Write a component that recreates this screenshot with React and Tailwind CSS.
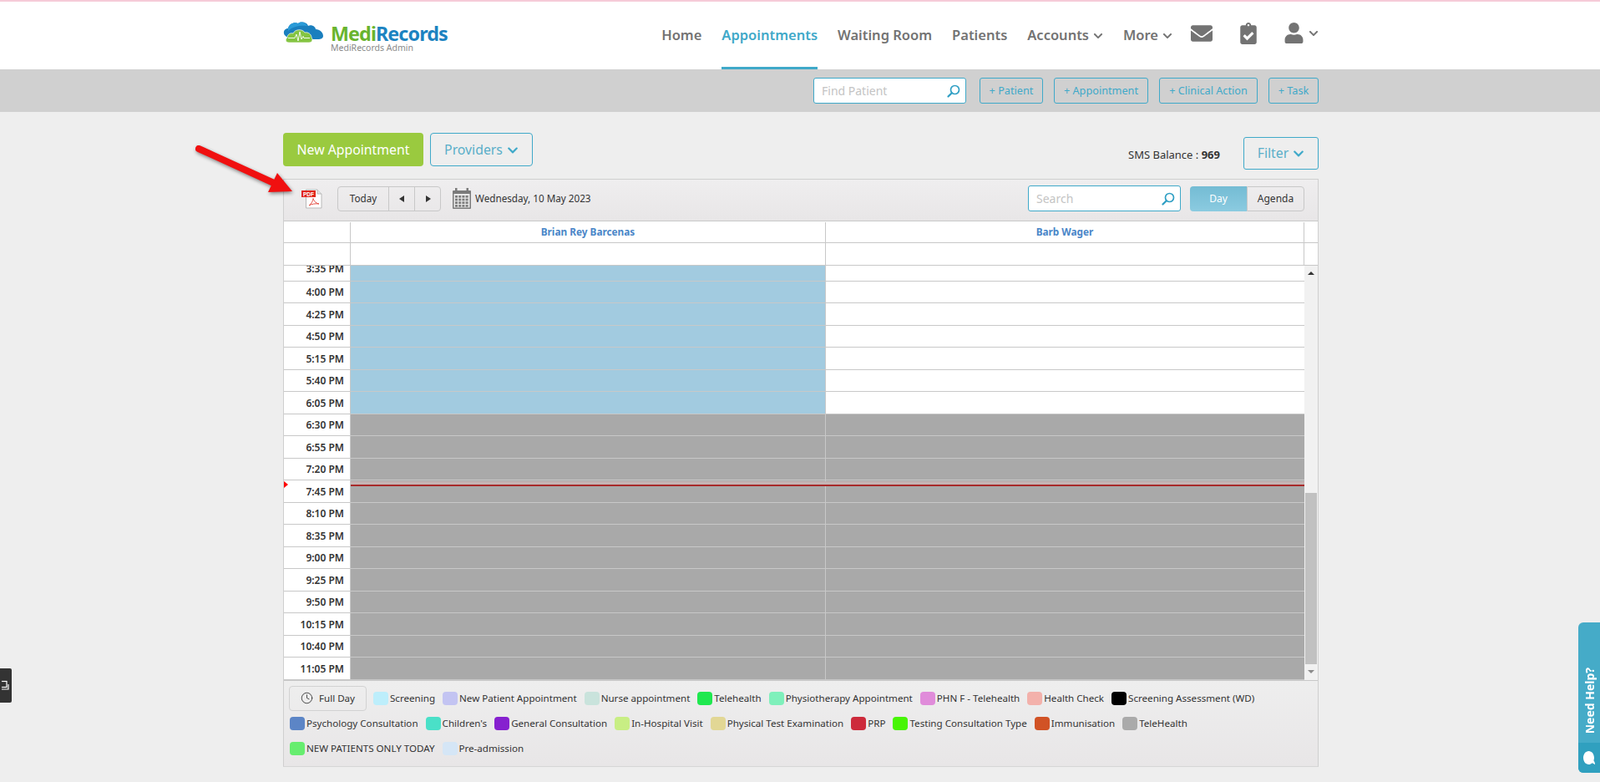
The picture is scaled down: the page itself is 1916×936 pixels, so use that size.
import React from "react";
import { FaEnvelope, FaClipboardCheck, FaUser, FaChevronDown, FaComment } from "react-icons/fa";
import { Clock } from "lucide-react";

const times = [
  "3:35 PM", "4:00 PM", "4:25 PM", "4:50 PM", "5:15 PM", "5:40 PM", "6:05 PM",
  "6:30 PM", "6:55 PM", "7:20 PM", "7:45 PM", "8:10 PM", "8:35 PM", "9:00 PM",
  "9:25 PM", "9:50 PM", "10:15 PM", "10:40 PM", "11:05 PM",
];

const legend = [
  ["Screening", "bg-[#bdeefb]"],
  ["New Patient Appointment", "bg-[#c3c4f2]"],
  ["Nurse appointment", "bg-[#c9e3dc]"],
  ["Telehealth", "bg-[#1fe84f]"],
  ["Physiotherapy Appointment", "bg-[#7ff0bb]"],
  ["PHN F - Telehealth", "bg-[#e08cda]"],
  ["Health Check", "bg-[#f3b1ab]"],
  ["Screening Assessment (WD)", "bg-black"],
  ["Psychology Consultation", "bg-[#5c85c6]"],
  ["Children's", "bg-[#4ae0c8]"],
  ["General Consultation", "bg-[#8620cf]"],
  ["In-Hospital Visit", "bg-[#c8ee84]"],
  ["Physical Test Examination", "bg-[#e2d795]"],
  ["PRP", "bg-[#cd2a3b]"],
  ["Testing Consultation Type", "bg-[#47f505]"],
  ["Immunisation", "bg-[#d15225]"],
  ["TeleHealth", "bg-[#aaaaaa]"],
  ["NEW PATIENTS ONLY TODAY", "bg-[#66ed6f]"],
  ["Pre-admission", "bg-[#d5e6f6]"],
];

const SearchIcon = () => (
  <svg width="16" height="16" viewBox="0 0 16 16" fill="none" stroke="#2f9fc4" strokeWidth="1.7">
    <circle cx="9.5" cy="6.5" r="5" />
    <path d="M5.8 10.2 L1.5 14.5" strokeWidth="2.2" strokeLinecap="round" />
  </svg>
);

const Logo = () => (
  <div className="flex items-start">
    <svg width="49" height="26" viewBox="0 0 49 26" className="mt-[24px]">
      <path d="M3 17 C-1 14 1 8 6 8 C7 3 13 0 18 2 C22 -1 29 1 30 5 C34 3 39 6 39 9 C44 9 48 13 48 17 C48 20 45 21 42 21 L10 21 C7 21 5 19 3 17 Z" fill="#1a7fbe" />
      <path d="M6 8 C7 3 13 0 18 2 C22 -1 27 1 29 5 C22 4 12 5 6 11 Z" fill="#2a9bd8" />
      <path d="M7 25 C3 25 2 21 5 19 C5 15 9 13 12 14 C14 9 23 8 26 13 C30 12 34 15 34 19 C36 21 35 25 31 25 Z" fill="#84c441" stroke="#ffffff" strokeWidth="0.7" />
      <path d="M6 19.5 H14 L16 15 L18 23 L20 12 L22 21 L24 17.5 L25 19.5 H32" fill="none" stroke="#ffffff" strokeWidth="0.9" />
    </svg>
    <div className="ml-[8px] mt-[28px] flex flex-col">
      <div className="text-[23.3px] font-bold leading-[20px] tracking-[-0.9px]">
        <span className="text-[#69b42e]">Medi</span>
        <span className="text-[#1c83c1]">Records</span>
      </div>
      <div className="mt-[1px] text-[10.5px] leading-[12px] text-[#8a8a8a]">MediRecords Admin</div>
    </div>
  </div>
);

const NavLink = ({ label, active, chevron }) => (
  <a
    className={
      "flex h-full items-center gap-[5px] border-b-[3px] pt-[3px] text-[16.5px] font-semibold " +
      (active ? "border-[#3fa9c9] text-[#3fa9c9]" : "border-transparent text-[#737373]")
    }
  >
    {label}
    {chevron && <FaChevronDown className="text-[12px] text-[#737373]" />}
  </a>
);

const PdfIcon = () => (
  <svg width="25" height="24" viewBox="0 0 25 24" className="ml-[21px]">
    <path d="M5.5 1 H19 L24 6 V23 H5.5 Z" fill="#ffffff" stroke="#b9b9b9" />
    <path d="M19 1 V6 H24" fill="#e4e4e4" stroke="#b9b9b9" />
    <rect x="0" y="2" width="17" height="8" fill="#e0261c" />
    <text x="8.5" y="8.5" textAnchor="middle" fontSize="6.5" fontWeight="700" fill="#ffffff" fontFamily="Liberation Sans, sans-serif">PDF</text>
    <path d="M9 20 C12 18 14 14 14 11.5 C14.5 14 17 17.5 21 18 C17 17.5 12 18 9 20 Z" fill="none" stroke="#e5534a" strokeWidth="1" />
  </svg>
);

const CalendarIcon = () => (
  <svg width="22" height="25" viewBox="0 0 22 25" className="ml-[14px]">
    <rect x="0" y="3" width="22" height="22" rx="1" fill="#7b7b7b" />
    <rect x="3" y="0" width="2.5" height="6" fill="#7b7b7b" />
    <rect x="16.5" y="0" width="2.5" height="6" fill="#7b7b7b" />
    <rect x="1.5" y="7" width="19" height="16.5" fill="#e9e9e9" />
    {[0, 1, 2, 3].map((row) =>
      [0, 1, 2, 3].map((col) => (
        <rect key={row + "-" + col} x={3 + col * 4.2} y={9 + row * 3.7} width="3" height="2.6" fill="#7b7b7b" />
      ))
    )}
  </svg>
);

const TimeRow = ({ time, index }) => {
  const first = index === 0;
  const busy = index >= 7;
  return (
    <div className={"flex border-b border-[#c8c8c8] " + (first ? "h-[18.5px]" : "h-[26.5px]")}>
      <div
        className={
          "flex w-[80px] shrink-0 justify-end overflow-hidden border-r border-[#c8c8c8] bg-white pr-[7px] text-[12px] font-semibold text-[#333333] " +
          (first ? "items-start" : "items-center pt-[2px]")
        }
      >
        <span className={first ? "-mt-[5px] leading-[17px]" : ""}>{time}</span>
      </div>
      <div className={"w-[568px] shrink-0 " + (busy ? "bg-[#a9a9a9]" : "bg-[#a2cbe0]")} />
      <div className={"flex-1 border-l border-[#c8c8c8] " + (busy ? "bg-[#a9a9a9]" : "bg-white")} />
    </div>
  );
};

const ToolBtn = ({ children, className = "" }) => (
  <button className={"h-[31px] rounded-[3px] border border-[#3fa9c9] text-[12.7px] text-[#3fa9c9] " + className}>
    {children}
  </button>
);

export default function App() {
  return (
    <div className="relative h-[936px] overflow-hidden bg-[#eeeeee] font-['Open_Sans',sans-serif]">
      <div className="h-[2px] bg-[#f6cbd8]" />

      {/* Header */}
      <header className="h-[81px] bg-white">
        <div className="ml-[339px] flex h-full w-[1240px] justify-between">
          <Logo />
          <nav className="flex h-full items-center gap-[24px]">
            <NavLink label="Home" />
            <NavLink label="Appointments" active />
            <NavLink label="Waiting Room" />
            <NavLink label="Patients" />
            <NavLink label="Accounts" chevron />
            <NavLink label="More" chevron />
            <div className="-ml-[2px] mb-[6px] flex items-center text-[#737373]">
              <FaEnvelope className="text-[26px]" />
              <FaClipboardCheck className="ml-[30px] text-[26px]" />
              <FaUser className="ml-[29px] text-[25px]" />
              <FaChevronDown className="ml-[5px] text-[12px]" />
            </div>
          </nav>
        </div>
      </header>

      {/* Quick actions */}
      <div className="flex h-[51px] items-center bg-[#d0d0d0]">
        <div className="ml-[339px] flex w-[1240px] items-center justify-end gap-[13px]">
          <div className="mr-[3px] flex h-[31px] w-[183px] items-center justify-between rounded-[3px] border border-[#3fa9c9] bg-white pl-[9px] pr-[6px] text-[14px] text-[#c4c4c4]">
            Find Patient
            <SearchIcon />
          </div>
          <ToolBtn className="w-[76px]">+ Patient</ToolBtn>
          <ToolBtn className="w-[113px]">+ Appointment</ToolBtn>
          <ToolBtn className="w-[118px]">+ Clinical Action</ToolBtn>
          <ToolBtn className="w-[60px]">+ Task</ToolBtn>
        </div>
      </div>

      <main className="ml-[339px] w-[1240px] pt-[25px]">
        {/* Action row */}
        <div className="flex h-[55px] justify-between">
          <div className="flex h-[40px] gap-[8px]">
            <button className="h-[40px] w-[168px] rounded-[4px] bg-[#9aca3f] pt-[1px] text-[15.8px] text-white">New Appointment</button>
            <button className="flex h-[40px] w-[123px] items-center justify-center gap-[5px] rounded-[4px] border border-[#3fa9c9] pt-[1px] text-[15.8px] text-[#5aaec9]">
              Providers
              <FaChevronDown className="text-[14px] text-[#3fa9c9]" />
            </button>
          </div>
          <div className="mt-[5px] flex h-[39px] items-center">
            <span className="mt-[5px] text-[13px] text-[#333333]">
              SMS Balance : <b className="font-bold">969</b>
            </span>
            <button className="ml-[28px] flex h-[39px] w-[90px] items-center justify-center gap-[5px] rounded-[3px] border border-[#3fa9c9] text-[15.8px] text-[#5aaec9]">
              Filter
              <FaChevronDown className="text-[14px] text-[#3fa9c9]" />
            </button>
          </div>
        </div>

        {/* Calendar panel */}
        <section className="border border-[#cfcfcf] border-b-[#d6d6d6]">
          <div className="flex h-[49px] items-center bg-gradient-to-b from-[#efeeef] to-[#e8e6e7] pb-[4px]">
            <PdfIcon />
            <div className="ml-[18px] flex h-[30px] items-center rounded-[4px] border border-[#c8c8c8] text-[11.7px] text-[#333333]">
              <span className="flex h-full w-[60px] items-center justify-center">Today</span>
              <span className="flex h-full w-[31px] items-center justify-center border-l border-[#c8c8c8]">
                <svg width="7" height="8" viewBox="0 0 7 8"><path d="M0 4 L6 0 V8 Z" fill="#333333" /></svg>
              </span>
              <span className="flex h-full w-[31px] items-center justify-center border-l border-[#c8c8c8]">
                <svg width="7" height="8" viewBox="0 0 7 8"><path d="M7 4 L1 0 V8 Z" fill="#333333" /></svg>
              </span>
            </div>
            <CalendarIcon />
            <span className="ml-[5px] text-[11.7px] text-[#333333]">Wednesday, 10 May 2023</span>
            <div className="ml-auto flex h-[31px] w-[183px] items-center justify-between rounded-[3px] border border-[#3fa9c9] bg-white pl-[9px] pr-[6px] text-[14px] text-[#c4c4c4]">
              Search
              <SearchIcon />
            </div>
            <div className="ml-[11px] mr-[16px] flex h-[30px] text-[12px]">
              <span className="flex w-[68px] items-center justify-center rounded-l-[4px] bg-gradient-to-b from-[#74bcd4] to-[#8bcbe0] text-white">Day</span>
              <span className="flex w-[69px] items-center justify-center rounded-r-[4px] border border-[#c8c8c8] text-[#333333]">Agenda</span>
            </div>
          </div>

          {/* Provider headers */}
          <div className="flex h-[27px] border-y border-[#c8c8c8] bg-white pt-[1px] text-[11.8px] font-bold text-[#4a86c8]">
            <div className="w-[80px] shrink-0 border-r border-[#c8c8c8]" />
            <div className="flex w-[568px] shrink-0 items-center justify-center">Brian Rey Barcenas</div>
            <div className="flex w-[574px] items-center justify-center border-x border-[#c8c8c8]">Barb Wager</div>
          </div>
          <div className="flex h-[27px] border-b border-[#c8c8c8] bg-white">
            <div className="w-[80px] shrink-0 border-r border-[#c8c8c8]" />
            <div className="w-[568px] shrink-0" />
            <div className="w-[574px] border-x border-[#c8c8c8]" />
          </div>

          {/* Time grid */}
          <div className="flex border-b border-[#c8c8c8]">
            <div className="relative w-[1222px] shrink-0">
              {times.map((time, i) => (
                <TimeRow key={time} time={time} index={i} />
              ))}
              <div className="absolute left-[80px] right-0 top-[258px] h-[4px] bg-[#c4b4b4]" />
              <div className="absolute left-[80px] right-0 top-[262px] h-[2px] bg-[#a82a2a]" />
              <div className="absolute left-0 top-[258px] h-0 w-0 border-y-[4px] border-l-[5px] border-y-transparent border-l-[#ff0000]" />
            </div>
            <div className="flex flex-1 flex-col items-center bg-[#f1f1f1]">
              <div className="flex h-[17px] items-center justify-center">
                <div className="h-0 w-0 border-x-[4px] border-b-[4px] border-x-transparent border-b-[#333333]" />
              </div>
              <div className="h-[255px]" />
              <div className="h-[205px] w-[14px] bg-[#c1c1c1]" />
              <div className="flex flex-1 items-center justify-center">
                <div className="h-0 w-0 border-x-[4px] border-t-[4px] border-x-transparent border-t-[#8a8a8a]" />
              </div>
            </div>
          </div>

          {/* Legend */}
          <div className="flex flex-wrap bg-gradient-to-b from-[#eeeeee] to-[#e8e6e7] pb-[6px] pl-[7px] pt-[6px] text-[11.6px] text-[#333333]">
            <button className="-ml-[1px] mr-[8px] flex h-[30px] w-[93px] items-center justify-center gap-[7px] rounded-[4px] border border-[#d2d2d2]">
              <Clock size={15} strokeWidth={1.4} />
              Full Day
            </button>
            {legend.map(([label, color]) => (
              <div key={label} className="mr-[9px] flex h-[30px] items-center gap-[2px]">
                <span className={"h-[16px] w-[18px] rounded-[4px] " + color} />
                {label}
              </div>
            ))}
          </div>
        </section>
      </main>

      {/* Red annotation arrow */}
      <svg width="125" height="65" viewBox="0 0 125 65" className="absolute left-[230px] top-[170px] drop-shadow-[1px_2px_2px_rgba(0,0,0,0.45)]">
        <path d="M8 8 L100 50" stroke="#f01010" strokeWidth="8" strokeLinecap="round" />
        <path d="M120 59 L102 37 L91 60 Z" fill="#f01010" />
      </svg>

      {/* Left feedback tab */}
      <div className="absolute left-0 top-[800px] flex h-[41px] w-[14px] items-center justify-center rounded-r-[2px] bg-[#333333]">
        <svg width="10" height="14" viewBox="0 0 10 14" fill="none" stroke="#ffffff" strokeWidth="1.2">
          <rect x="-2" y="1.5" width="8" height="7" />
          <path d="M-2 11 H8 V5" />
        </svg>
      </div>

      {/* Need help tab */}
      <div className="absolute right-0 top-[745px] flex h-[180px] w-[26px] flex-col overflow-hidden rounded-l-[6px] bg-[#45abc8]">
        <div className="flex h-[144px] items-end justify-center pb-[11px]">
          <span className="rotate-180 whitespace-nowrap font-['Liberation_Sans'] text-[14px] font-bold text-white [writing-mode:vertical-rl]">Need Help?</span>
        </div>
        <div className="flex flex-1 items-center justify-center bg-[#30a0bf]">
          <FaComment className="-rotate-90 text-[16px] text-white" />
        </div>
      </div>
    </div>
  );
}
